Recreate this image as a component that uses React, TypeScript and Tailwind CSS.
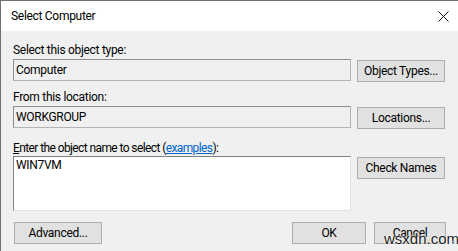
import React from "react";

const font = { fontFamily: 'Roboto, "Noto Sans", sans-serif' };

function Button({ label, className = "" }: { label: string; className?: string }) {
  return (
    <div
      className={`flex h-[22px] items-center justify-center border border-[#adadad] bg-[#e1e1e1] text-[12px] leading-none tracking-[-0.3px] text-black ${className}`}
    >
      {label}
    </div>
  );
}

function ReadOnlyField({ value }: { value: string }) {
  return (
    <div className="flex h-[22px] w-[338px] items-center border border-t-[#8f8f8f] border-l-[#8f8f8f] border-r-[#b4b4b4] border-b-[#b4b4b4] bg-[#f0f0f0] pl-[2px] text-[12px] text-black">
      {value}
    </div>
  );
}

export default function App() {
  return (
    <div
      className="relative h-[251px] w-[458px] overflow-hidden border-l border-t border-[#707070] bg-[#f0f0f0] tracking-[-0.3px] text-black"
      style={font}
    >
      {/* Title bar */}
      <div className="flex h-[30px] items-center justify-between bg-white pl-[10px] pr-[9px]">
        <span className="text-[12px]">Select Computer</span>
        <svg width="11" height="11" viewBox="0 0 11 11" className="mt-[1px]">
          <path d="M0.5 0.5 L10.5 10.5 M10.5 0.5 L0.5 10.5" stroke="#111" strokeWidth="1" />
        </svg>
      </div>

      {/* Body */}
      <div className="flex flex-col pl-[12px] pt-[11px]">
        <div className="h-[16px] text-[12px] leading-[16px]">Select this object type:</div>
        <div className="mt-[1px] flex gap-[6px]">
          <ReadOnlyField value="Computer" />
          <Button label="Object Types..." className="mt-[1px] w-[88px]" />
        </div>

        <div className="mt-[7px] h-[16px] text-[12px] leading-[16px]">From this location:</div>
        <div className="mt-[1px] flex gap-[6px]">
          <ReadOnlyField value="WORKGROUP" />
          <Button label="Locations..." className="mt-[1px] w-[88px]" />
        </div>

        <div className="mt-[11px] h-[16px] text-[12px] leading-[16px] tracking-[-0.6px]">
          <span className="underline">E</span>nter the object name to select (
          <span className="text-[#0066cc] underline">examples</span>):
        </div>
        <div className="flex gap-[6px]">
          <div className="h-[55px] w-[338px] border border-t-[#828282] border-l-[#828282] border-r-[#e3e3e3] border-b-[#e3e3e3] bg-white pl-[2px] text-[12px] leading-[16px]">
            WIN7VM
          </div>
          <Button label="Check Names" className="mt-[1px] w-[88px]" />
        </div>

        <div className="mt-[11px] flex">
          <Button label="Advanced..." className="ml-[1px] h-[21px] w-[88px]" />
          <Button label="OK" className="ml-[190px] h-[21px] w-[74px]" />
          <Button label="Cancel" className="ml-[8px] h-[21px] w-[72px]" />
        </div>
      </div>

      {/* Watermark */}
      <div
        className="absolute left-[383px] top-[229px] text-[15px] leading-[18px] tracking-normal text-[#222]"
        style={{ fontFamily: '"Liberation Sans", sans-serif', textShadow: "0 0 2px #fff, 0 0 2px #fff" }}
      >
        wsxdn.com
      </div>
      <div className="absolute left-[451px] top-[240px] grid grid-cols-3 gap-[1px]">
        {[0, 1, 2, 3, 4, 5].map((i) => (
          <div key={i} className="h-[1px] w-[1px] bg-[#bdbdbd]" />
        ))}
      </div>
    </div>
  );
}
